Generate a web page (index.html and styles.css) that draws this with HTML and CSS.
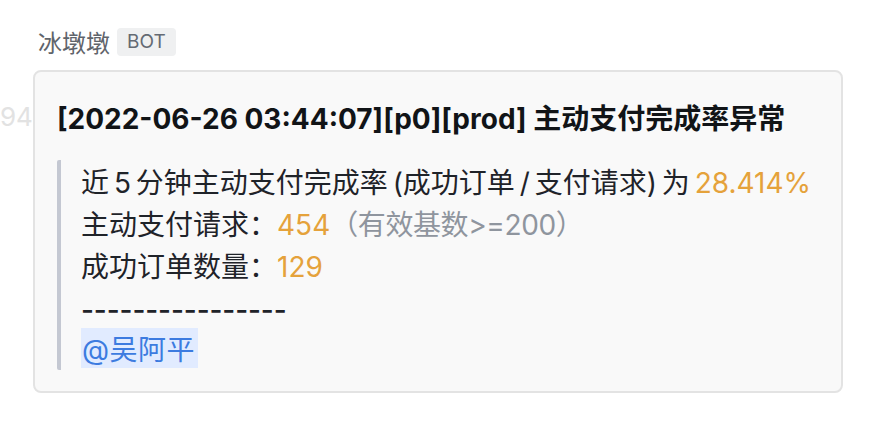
FILE: index.html
```html
<!DOCTYPE html>
<html lang="zh-CN">
<head>
  <meta charset="UTF-8">
  <title>冰墩墩 BOT</title>
  <link rel="stylesheet" href="styles.css">
</head>
<body>
  <div class="ghost">949</div>

  <div class="message">
    <div class="sender">
      <span class="name">冰墩墩</span>
      <span class="tag">BOT</span>
    </div>

    <div class="card">
      <h2 class="title">[2022-06-26 03:44:07][p0][prod] 主动支付完成率异常</h2>
      <div class="quote">
        <p>近 5 分钟主动支付完成率 (成功订单 / 支付请求) 为 <span class="num">28.414%</span></p>
        <p>主动支付请求：<span class="num">454</span><span class="hint">（有效基数&gt;=200）</span></p>
        <p>成功订单数量：<span class="num">129</span></p>
        <p class="dashes">----------------</p>
        <p><span class="mention">@吴阿平</span></p>
      </div>
    </div>
  </div>
</body>
</html>
```

FILE: styles.css
```css
body {
  margin: 0;
  padding: 0;
  background: #ffffff;
  font-family: Inter, "Noto Sans CJK SC", sans-serif;
  color: #1f2329;
}

.ghost {
  position: absolute;
  left: 0;
  top: 101px;
  font-size: 26px;
  color: #e2e2e2;
  z-index: 0;
}

.message {
  position: relative;
  z-index: 1;
  padding: 24px 0 0 33px;
  width: 810px;
}

.sender {
  display: flex;
  align-items: center;
  gap: 7px;
  margin-left: 5px;
  height: 36px;
}

.name {
  font-family: "Noto Sans CJK SC", sans-serif;
  font-size: 24px;
  color: #5f646b;
  line-height: 1;
}

.tag {
  font-size: 19px;
  line-height: 28px;
  padding: 0 10px;
  border-radius: 4px;
  background: #eff0f1;
  color: #646a73;
}

.card {
  margin-top: 10px;
  border: 2px solid #e3e3e3;
  border-radius: 8px;
  background: #f9f9f9;
  padding: 26px 22px 21px;
}

.title {
  margin: 0;
  font-size: 28px;
  font-weight: 700;
  line-height: 42px;
  color: #111417;
}

.quote {
  margin-top: 20px;
  border-left: 4px solid #c4c8d2;
  border-radius: 2px;
  padding-left: 20px;
}

.quote p {
  margin: 0;
  padding-top: 4px;
  font-size: 28px;
  line-height: 38px;
  white-space: nowrap;
  word-spacing: -3px;
}

.num {
  color: #e5a23b;
}

.hint {
  color: #8f959e;
  letter-spacing: -0.4px;
}

.quote .dashes {
  padding-top: 7px;
  line-height: 35px;
  letter-spacing: -0.1px;
  font-weight: 500;
}

.mention {
  display: inline-block;
  vertical-align: top;
  margin-top: -4px;
  padding: 5px 3px 0 1px;
  line-height: 35px;
  letter-spacing: 0.5px;
  background: #e1ebff;
  color: #3c7be0;
}
```
